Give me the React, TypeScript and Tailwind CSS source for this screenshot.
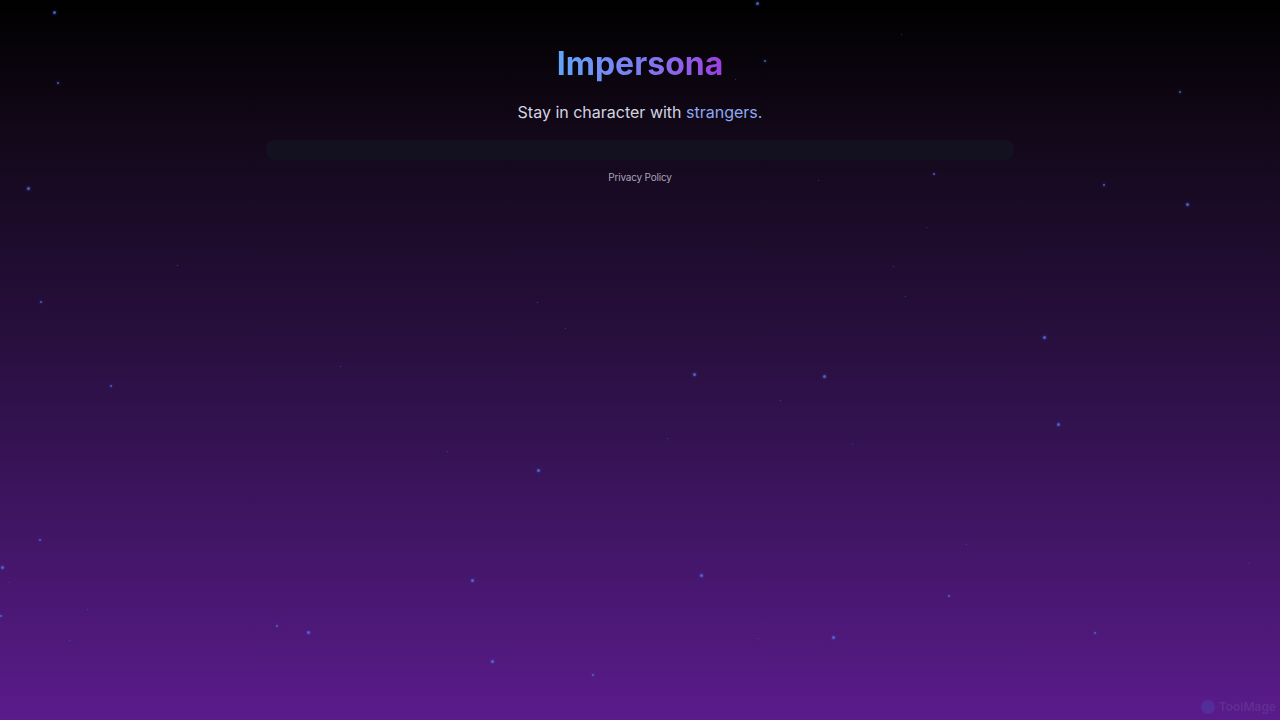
const stars: [number, number, number][] = [
  [54, 12, 3], [757, 3, 3], [901, 34, 1], [765, 61, 2], [735, 79, 1], [58, 83, 2],
  [1180, 92, 2], [28, 188, 3], [934, 174, 2], [1104, 185, 2], [1187, 204, 3], [818, 180, 1],
  [926, 227, 1], [177, 265, 1], [893, 266, 1], [41, 302, 2], [905, 296, 1], [537, 302, 1],
  [565, 328, 1], [1044, 337, 3], [340, 366, 1], [694, 374, 3], [824, 376, 3], [111, 386, 2],
  [780, 400, 1], [1058, 424, 3], [667, 438, 1], [852, 444, 1], [447, 451, 1], [538, 470, 3],
  [966, 544, 1], [40, 540, 2], [2, 567, 3], [9, 582, 1], [472, 580, 3], [701, 575, 3],
  [949, 596, 2], [87, 609, 1], [1, 616, 2], [277, 626, 2], [308, 632, 3], [833, 637, 3],
  [1095, 633, 2], [69, 640, 1], [758, 638, 1], [492, 661, 3], [593, 675, 2], [1249, 563, 1],
  [425, 145, 1],
];

function Starfield() {
  return (
    <div className="pointer-events-none absolute inset-0">
      {stars.map(([x, y, s], i) => (
        <span
          key={i}
          className="absolute rounded-full bg-[#5672e6] shadow-[0_0_3px_#4a63d0]"
          style={{ left: x - s / 2, top: y - s / 2, width: s, height: s, opacity: s === 1 ? 0.5 : 0.8 }}
        />
      ))}
    </div>
  );
}

export default function App() {
  return (
    <div
      className="relative h-[720px] w-full overflow-hidden bg-[linear-gradient(to_bottom,#000000_0%,#120818_18%,#2a1042_50%,#5a1b8b_100%)]"
      style={{ fontFamily: "Inter, 'Noto Sans', sans-serif" }}
    >
      <Starfield />
      <main className="relative flex flex-col items-center pt-[44px]">
        <h1 className="bg-gradient-to-r from-[#60a5fa] via-[#7b7cf0] to-[#9b3de0] bg-clip-text text-[32px] leading-[40px] font-bold text-transparent">
          Impersona
        </h1>
        <p className="mt-[16px] text-[16px] leading-6 text-[#d4d4e0]">
          Stay in character with <span className="text-[#8fa8f0]">strangers.</span>
        </p>
        <div className="mt-[16px] h-[20px] w-[748px] rounded-lg bg-[#13101f]" />
        <a href="#" className="mt-[9px] text-[10px] leading-4 tracking-[-0.02em] text-[#a8a4b8]">
          Privacy Policy
        </a>
      </main>
      <div className="absolute right-[4px] bottom-[4px] flex items-center gap-1 opacity-25">
        <span className="h-[14px] w-[14px] rounded-full bg-[#4a63d0]" />
        <span className="text-[12px] font-semibold text-[#7a6ab0]">ToolMage</span>
      </div>
    </div>
  );
}
